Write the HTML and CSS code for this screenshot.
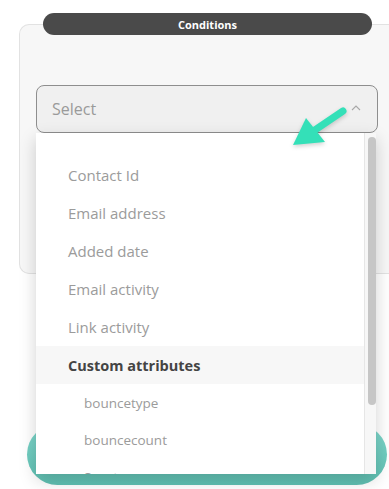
FILE: index.html
```html
<!DOCTYPE html>
<html lang="en">
<head>
    <meta charset="UTF-8">
    <meta name="viewport" content="width=device-width, initial-scale=1.0">
    <title>Conditions</title>
    <link rel="stylesheet" href="styles.css">
</head>
<body>
    <div class="page">
        <div class="title-pill">Conditions</div>

        <div class="panel">
            <div class="select-wrap">
                <div class="select-box">
                    <span class="placeholder">Select</span>
                    <svg class="chevron" width="10" height="6" viewBox="0 0 10 6">
                        <polyline points="1,5 5,1 9,5" fill="none" stroke="#a8a8a8" stroke-width="1.1"/>
                    </svg>
                </div>

                <div class="dropdown">
                    <ul class="options">
                        <li class="option">Contact Id</li>
                        <li class="option">Email address</li>
                        <li class="option">Added date</li>
                        <li class="option">Email activity</li>
                        <li class="option">Link activity</li>
                        <li class="option group">Custom attributes</li>
                        <li class="option sub">bouncetype</li>
                        <li class="option sub">bouncecount</li>
                        <li class="option sub">Sport</li>
                    </ul>
                    <div class="scroll-track">
                        <div class="scroll-thumb"></div>
                    </div>
                </div>
            </div>
        </div>

        <div class="cta"></div>

        <!-- hint arrow pointing at the list -->
        <svg class="hint-arrow" width="64" height="48" viewBox="0 0 64 48">
            <line x1="53" y1="6" x2="22" y2="27" stroke="#34e0b8" stroke-width="7" stroke-linecap="round"/>
            <polygon points="3,40 16,13 35,37" fill="#34e0b8"/>
        </svg>
    </div>
</body>
</html>
```

FILE: styles.css
```css
body {
    margin: 0;
    background: #fff;
    font-family: 'Open Sans', 'Noto Sans', sans-serif;
    overflow: hidden;
    width: 389px;
    height: 489px;
}

.page {
    position: relative;
    padding-top: 13px;
}

.title-pill {
    position: relative;
    z-index: 2;
    margin-left: 43px;
    width: 329px;
    height: 22px;
    border-radius: 11px;
    background: #4a4a4a;
    color: #fff;
    font-size: 11px;
    font-weight: 700;
    display: flex;
    align-items: center;
    justify-content: center;
}

/* panel runs off the right edge of the frame */
.panel {
    position: relative;
    z-index: 1;
    margin-top: -11px;
    margin-left: 19px;
    width: 370px;
    height: 250px;
    box-sizing: border-box;
    background: #f7f7f7;
    border: 1px solid #e2e2e2;
    border-right: none;
    border-radius: 10px 0 0 10px;
    padding: 60px 0 0 16px;
}

.select-wrap {
    position: relative;
    width: 342px;
}

.select-box {
    height: 48px;
    box-sizing: border-box;
    border: 1px solid #8e8e8e;
    border-radius: 8px;
    background: #f0f0f0;
    display: flex;
    align-items: center;
    justify-content: space-between;
    padding: 0 16px 0 15px;
}

.placeholder {
    color: #9a9a9a;
    font-size: 16px;
}

.chevron {
    margin-top: -2px;
}

.dropdown {
    position: absolute;
    top: 48px;
    left: 0;
    width: 340px;
    height: 341px;
    background: #fff;
    box-shadow: 0 6px 16px rgba(0, 0, 0, 0.18);
    display: flex;
    overflow: hidden;
}

.options {
    flex: 1;
    list-style: none;
    margin: 0;
    padding: 23px 0 0;
}

.option {
    height: 38px;
    display: flex;
    align-items: center;
    padding-left: 32px;
    color: #9b9b9b;
    font-size: 15px;
}

.option.group {
    background: #f7f7f7;
    color: #444;
    font-weight: 700;
    font-size: 14.5px;
}

.option.sub {
    height: 37px;
    padding-left: 48px;
    font-size: 13.5px;
}

.scroll-track {
    width: 12px;
    background: #f7f7f7;
    border-left: 1px solid #e6e6e6;
    padding: 4px 1px 0 3px;
    box-sizing: border-box;
}

.scroll-thumb {
    width: 8px;
    height: 268px;
    border-radius: 4px;
    background: #c6c6c6;
}

.cta {
    margin-top: 150px;
    margin-left: 27px;
    width: 360px;
    height: 61px;
    border-radius: 31px;
    background: linear-gradient(180deg, #7fd7cc 0%, #5fc0b2 100%);
}

.hint-arrow {
    position: absolute;
    z-index: 5;
    left: 290px;
    top: 105px;
    filter: drop-shadow(0 2px 2px rgba(0, 0, 0, 0.18));
}
```
